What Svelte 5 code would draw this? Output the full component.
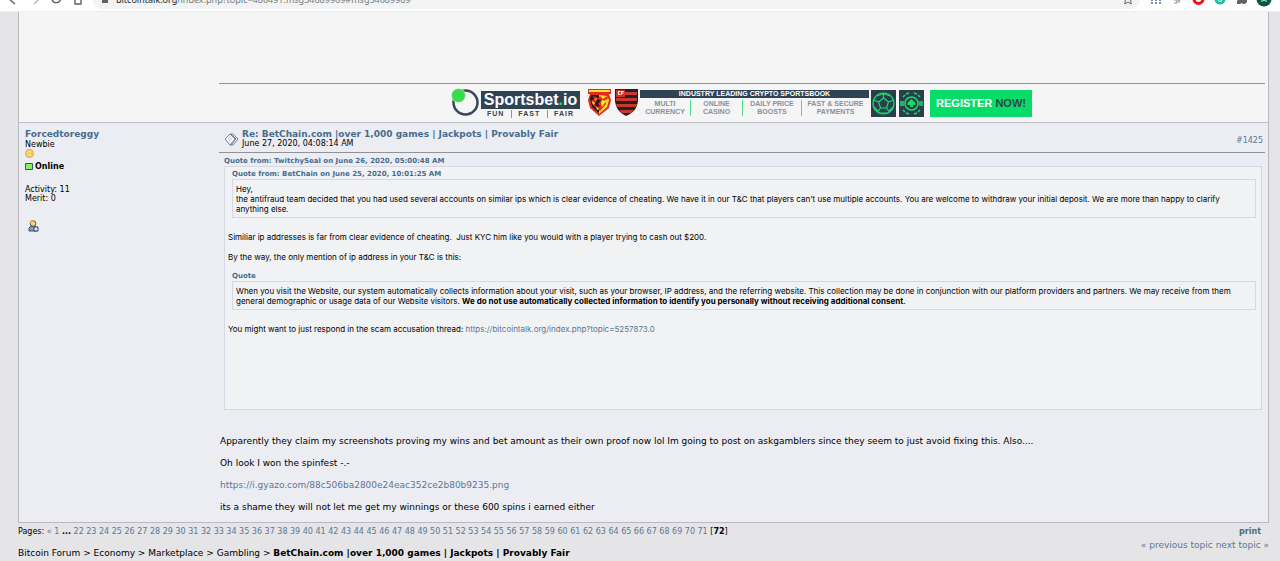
<script>
    const pages = Array.from({ length: 50 }, (_, i) => i + 22);
    const crumbs = ["Bitcoin Forum", "Economy", "Marketplace", "Gambling"];
    const topic = "BetChain.com |over 1,000 games | Jackpots | Provably Fair";
    const features = [
        ["MULTI", "CURRENCY"],
        ["ONLINE", "CASINO"],
        ["DAILY PRICE", "BOOSTS"],
        ["FAST & SECURE", "PAYMENTS"]
    ];
</script>

<header class="browser">
    <div class="nav">
        <svg width="93" height="12" viewBox="0 0 93 12" fill="none" stroke="#5f6368" stroke-width="1.4">
            <path d="M15 4 L9 -1" />
            <path d="M34 4 L39 -1" stroke="#b8babd" />
            <path d="M52 -1 A4.3 4.3 0 0 0 60.5 -1" />
            <path d="M75 -1 V4 H81 V-1" />
        </svg>
    </div>
    <div class="address">
        <svg width="6" height="12" viewBox="0 0 6 12"><path d="M0 0 H6 V3 H0Z" fill="#5f6368" /></svg>
        <span class="url"><b>bitcointalk.org</b>/index.php?topic=486491.msg54689969#msg54689969</span>
        <svg width="10" height="12" viewBox="0 0 10 12" fill="none" stroke="#5f6368"><path d="M2.5 -1 L1.8 4 L5 2 L8.2 4 L7.5 -1" /></svg>
    </div>
    <svg class="extensions" width="130" height="12" viewBox="0 0 130 12">
        <path d="M1 0h2v1h-2zm4 0h2v1h-2zm4 0h2v1h-2zM1 2h2v2h-2zm4 0h2v2h-2zm4 0h2v2h-2z" fill="#7b8aa5" />
        <path d="M24 0h3v3h-3M29 0v3M28 0h2" fill="none" stroke="#85888b" />
        <path d="M44 -1a4.500 4.500 0 0 0 9 0" fill="none" stroke="#ee1218" stroke-width="3" />
        <circle cx="70" cy="-1" r="5.5" fill="#15c39a" />
        <path d="M68 -1a2 2 0 0 0 4 1h-2" fill="none" stroke="#fff" />
        <path d="M87 4v-3l2-2h8v3l-2 2h-2l-1-1-2 1z" fill="#5f6368" />
        <circle cx="114" cy="-1" r="7.5" fill="#075846" />
        <path d="M112 2v-4l2 3 2-3v4" fill="none" stroke="#d9e9e5" />
    </svg>
</header>

<main>
    <section class="posts">
        <div class="previous">
            <hr>
            <div class="banner">
                <svg width="30" height="29" viewBox="0 0 30 29">
                    <circle cx="14.5" cy="14.5" r="12" fill="none" stroke="#3b4658" stroke-width="2.5" />
                    <circle cx="7.5" cy="7.5" r="7" fill="#35dc4a" stroke="#f5f5f5" stroke-width="0.6" />
                </svg>
                <div class="brand">
                    <div class="name">Sportsbet<i>.</i>io</div>
                    <div class="slogan"><span>FUN</span><i></i><span>FAST</span><i></i><span>FAIR</span></div>
                </div>
                <svg class="crest" width="25" height="29" viewBox="0 0 25 29">
                    <path d="M1 1h23v5h-2l2 6-2 8-10 8-9-8-2-8 2-6H1z" fill="#e32b20" />
                    <path d="M2 2h21v2H2z" fill="#ffdf31" />
                    <path d="M4 7h8v18l-7-6-2-8z" fill="#231d1a" />
                    <path d="M12 7l8 1 2 4-2 7-8 7z" fill="#f8dc2e" />
                    <path d="M6 8l5 2 2-2 3 3 4-3 1 3-3 1 1 4-6 7-6-5-3-5 3-2z" fill="#e32b20" />
                    <path d="M5 13l3 2-2 2zM15 12l4 1-4 6-1-4zM9 10l2 3-3-1zM9 18l3 3-2 1z" fill="#ffe22e" />
                    <path d="M10 11l4 1-3 4 2 2-3 1-2-3z" fill="#2a1714" />
                </svg>
                <svg class="crest" width="23" height="29" viewBox="0 0 23 29">
                    <path d="M0 1h23v12c-1 8-5 12-12 15C5 25 1 21 0 13z" fill="#241f22" />
                    <path d="M10 4h12v3H10zM1 10h21v3H1zM1 16h21l-1 3H2zM4 22h15l-3 3H7z" fill="#c9382c" />
                    <path d="M1 2h9v7H1z" fill="#d23328" />
                    <path d="M5.5 3.5h-2v3h2M8.5 3.5h-2v3M6.5 5h2" stroke="#fff" fill="none" />
                </svg>
                <div class="industry">
                    <strong>INDUSTRY LEADING CRYPTO SPORTSBOOK</strong>
                    <div class="features">
                        {#each features as feature}
                            <span>{feature[0]}<br>{feature[1]}</span>
                        {/each}
                    </div>
                </div>
                <svg class="tile" width="25" height="27" viewBox="0 0 25 27" fill="none" stroke="#1edb68" stroke-width="1.2">
                    <path d="M0 0h25v27H0z" fill="#293f4d" stroke="none" />
                    <circle cx="12.5" cy="13.5" r="10.5" />
                    <path d="M12.5 8l5 4-2 6h-6l-2-6zM12.5 8V3M17.5 12l5-2M15.5 18l3 4M9.5 18l-3 4M7.5 12l-5-2M5 6l7.5-2 7.5 2M3 17l4 4M22 17l-4 4M8 23h9" />
                </svg>
                <svg class="tile" width="25" height="27" viewBox="0 0 25 27" fill="none" stroke="#1edb68" stroke-width="1.5">
                    <path d="M0 0h25v27H0z" fill="#293f4d" stroke="none" />
                    <circle cx="12.5" cy="13.5" r="6.5" />
                    <path d="M12.5 9l4 4v2h-3l1 2h-4l1-2h-3v-2z" fill="#1edb68" stroke="none" />
                    <path d="M2 11v5M4 11v5M21 11v5M23 11v5M7 4l3-1M15 3l3 1M7 23l3 1M15 24l3-1M4 7l2-2M19 5l2 2M4 20l2 2M21 20l-2 2" />
                </svg>
                <a class="register" href="#register">REGISTER <b>NOW!</b></a>
            </div>
        </div>

        <article class="post">
            <aside>
                <a class="user" href="#user">Forcedtoreggy</a>
                <div>Newbie</div>
                <svg width="9" height="9" viewBox="0 0 9 9">
                    <circle cx="4.5" cy="4.5" r="4" fill="#f5cc68" stroke="#dda94a" />
                    <path d="M2 4q2-3 4-1M3 6h3" stroke="#ffe9ae" fill="none" />
                </svg>
                <div class="online">
                    <svg width="8" height="8" viewBox="0 0 8 8"><path d="M.5 .5h7v6h-7z" fill="#87ee66" stroke="#36576d" /></svg>
                    <b>Online</b>
                </div>
                <div class="stats">Activity: 11<br>Merit: 0</div>
                <a class="profile" href="#profile" aria-label="View Profile">
                    <svg width="11" height="12" viewBox="0 0 11 12">
                        <path d="M1 11v-3l2-2h4l2 2v3z" fill="#73a2d0" stroke="#47515e" />
                        <circle cx="5" cy="3.5" r="2.8" fill="#f6d28b" stroke="#59503e" />
                        <path d="M2 3q1-3 4-2" fill="none" stroke="#ffb400" />
                        <path d="M6 7h4v4H6z" fill="#e9edf0" stroke="#333c46" />
                    </svg>
                </a>
            </aside>
            <div class="message">
                <div class="heading">
                    <svg width="15" height="15" viewBox="0 0 15 15" fill="#f4f6fb" stroke="#75839a">
                        <path d="M7 1h2l5 5-5 6H7" />
                        <path d="M6 1h1l5 5-5 6H6" />
                        <path d="M6 1l5 5-5 6-5-6z" />
                        <path d="M4 6l3-3M5 8l3-3" stroke="#b6c2d1" />
                    </svg>
                    <div class="title">
                        <a href="#topic">Re: {topic}</a>
                        <div>June 27, 2020, 04:08:14 AM</div>
                    </div>
                    <a class="number" href="#msg">#1425</a>
                </div>
                <hr>
                <a class="quoteheader" href="#quote">Quote from: TwitchySeal on June 26, 2020, 05:00:48 AM</a>
                <blockquote class="outer">
                    <a class="quoteheader" href="#quote">Quote from: BetChain on June 25, 2020, 10:01:25 AM</a>
                    <blockquote>
                        Hey,<br>
                        the antifraud team decided that you had used several accounts on similar ips which is clear evidence of cheating. We have it in our T&C that players can't use multiple accounts. You are welcome to withdraw your initial deposit. We are more than happy to clarify<br>
                        anything else.
                    </blockquote>
                    <p>Similiar ip addresses is far from clear evidence of cheating.&nbsp; Just KYC him like you would with a player trying to cash out $200.</p>
                    <p>By the way, the only mention of ip address in your T&C is this:</p>
                    <div class="quoteheader">Quote</div>
                    <blockquote>
                        When you visit the Website, our system automatically collects information about your visit, such as your browser, IP address, and the referring website. This collection may be done in conjunction with our platform providers and partners. We may receive from them<br>
                        general demographic or usage data of our Website visitors. <b>We do not use automatically collected information to identify you personally without receiving additional consent.</b>
                    </blockquote>
                    <p>You might want to just respond in the scam accusation thread: <a href="#thread">https://bitcointalk.org/index.php?topic=5257873.0</a></p>
                </blockquote>
                <div class="body">
                    <p>Apparently they claim my screenshots proving my wins and bet amount as their own proof now lol Im going to post on askgamblers since they seem to just avoid fixing this. Also....</p>
                    <p>Oh look I won the spinfest -.-</p>
                    <p><a href="#image">https://i.gyazo.com/88c506ba2800e24eac352ce2b80b9235.png</a></p>
                    <p>its a shame they will not let me get my winnings or these 600 spins i earned either</p>
                </div>
            </div>
        </article>
    </section>

    <footer>
        <div>
            <div class="pages">
                Pages: <a href="#prev">«</a> <a href="#1">1</a> <b>...</b>
                {#each pages as page}<a href="#{page}">{page}</a>{" "}{/each}[<b>72</b>]
            </div>
            <div class="crumbs">
                {#each crumbs as crumb}<a href="#{crumb}">{crumb}</a>{" > "}{/each}<b>{topic}</b>
            </div>
        </div>
        <div class="links">
            <a class="print" href="#print">print</a>
            <div><a href="#previous">« previous topic</a> <a href="#next">next topic »</a></div>
        </div>
    </footer>
</main>

<style>
    :global(body) {
        margin: 0;
        background-color: #e5e5e7;
        overflow: hidden;
    }
    a {
        color: #5a7797;
        text-decoration: none;
    }
    p, blockquote {
        margin: 0;
    }
    svg {
        display: block;
        flex: none;
    }
    hr {
        height: 1px;
        margin: 0;
        border: 0;
        background-color: #919197;
    }
    .browser {
        display: flex;
        height: 11px;
        overflow: hidden;
        background-color: #fff;
        border-bottom: 1px solid #ececec;
    }
    .nav {
        display: flex;
        width: 93px;
    }
    .address {
        display: flex;
        flex: 1;
        height: 9px;
        gap: 8px;
        padding: 0 7px 0 9px;
        background-color: #f1f3f4;
        border-radius: 0 0 10px 10px;
    }
    .url {
        flex: 1;
        margin-top: -6px;
        font: 9px/12px "Noto Sans", sans-serif;
        color: #777b80;
    }
    .url b {
        font-weight: 400;
        color: #24272b;
    }
    .extensions {
        margin-left: 10px;
    }
    main {
        font-family: Verdana, "DejaVu Sans", sans-serif;
        font-size: 9px;
        line-height: 11px;
        color: #000;
        padding: 0 11px 0 18px;
    }
    .posts {
        border: 1px solid #b9bac0;
        border-top: 0;
        background-color: #ecedf3;
    }
    .previous {
        height: 111px;
        box-sizing: border-box;
        padding: 71px 3px 0 200px;
        background-color: #f5f5f5;
        border-bottom: 1px solid #bfc0ca;
    }
    .banner {
        display: flex;
        justify-content: center;
        margin-top: 4px;
        margin-right: 1px;
        font-family: "Liberation Sans", Arial, sans-serif;
        font-weight: 700;
    }
    .brand {
        width: 99px;
    }
    .name {
        margin-top: 3px;
        background-color: #304354;
        color: #fff;
        font-size: 16px;
        line-height: 18px;
        text-align: center;
    }
    .name i {
        font-style: normal;
        color: #1edb68;
    }
    .slogan {
        display: flex;
        justify-content: space-between;
        padding: 1px 6px;
        font-size: 7px;
        line-height: 8px;
        letter-spacing: 1px;
        color: #344253;
    }
    .slogan i {
        width: 1px;
        background-color: #1edb68;
    }
    .crest {
        margin-left: 7px;
    }
    .crest + .crest {
        margin-left: 3px;
    }
    .industry {
        width: 229px;
        margin: 2px 2px 0 2px;
        text-align: center;
    }
    .industry strong {
        display: block;
        background-color: #304354;
        color: #fff;
        font-size: 7px;
        line-height: 8px;
        font-weight: 900;
    }
    .features {
        display: grid;
        grid-template-columns: 50fr 52fr 59fr 68fr;
        margin-top: 2px;
        color: #84929f;
        font-size: 7px;
        line-height: 8px;
    }
    .features span {
        white-space: nowrap;
    }
    .features span + span {
        border-left: 1px solid #4bde84;
    }
    .tile {
        margin-top: 2px;
    }
    .tile + .tile {
        margin-left: 3px;
    }
    .register {
        width: 102px;
        height: 27px;
        margin: 2px 0 0 6px;
        background-color: #08dc68;
        color: #fff;
        font-size: 11px;
        line-height: 27px;
        text-align: center;
    }
    .register b {
        color: #294a48;
    }
    .post {
        display: flex;
        min-height: 399px;
    }
    aside {
        width: 194px;
        flex: none;
        padding: 6px 0 0 6px;
        font-size: 8px;
        line-height: 9px;
    }
    .user, .title a {
        display: block;
        font-size: 9px;
        line-height: 10px;
        font-weight: 700;
        color: #476c8e;
    }
    .user {
        margin-bottom: 1px;
    }
    .online {
        display: flex;
        align-items: center;
        gap: 2px;
        margin-top: 4px;
    }
    .stats {
        margin-top: 14px;
    }
    .profile {
        display: block;
        margin: 17px 0 0 3px;
    }
    .message {
        flex: 1;
        min-width: 0;
        padding: 6px 3px 0 0;
    }
    .heading {
        display: flex;
        align-items: center;
        height: 23px;
        padding: 0 2px 0 5px;
        gap: 3px;
        font-size: 8px;
        line-height: 10px;
    }
    .title {
        flex: 1;
        align-self: flex-start;
    }
    .quoteheader {
        display: block;
        font-family: Verdana, "DejaVu Sans", sans-serif;
        font-size: 7px;
        line-height: 9px;
        font-weight: 700;
        color: #476c8e;
    }
    .message > .quoteheader {
        margin: 4px 0 0 5px;
    }
    blockquote {
        padding: 4px 3px 3px;
        border: 1px solid #d6d8e6;
        background-color: #f1f2f4;
        font-family: Inter, Verdana, sans-serif;
        font-size: 8px;
        line-height: 10px;
    }
    .outer {
        min-height: 236px;
        padding-top: 3px;
        margin: 0 3px 0 5px;
    }
    .outer > .quoteheader, .outer > blockquote {
        margin-left: 4px;
        margin-right: 2px;
    }
    .outer > p {
        margin: 10px 0;
    }
    .outer > blockquote + p {
        margin-top: 14px;
    }
    .body {
        padding: 26px 0 7px 1px;
    }
    .body p + p {
        margin-top: 11px;
    }
    footer {
        display: flex;
        justify-content: space-between;
        padding-top: 3px;
    }
    .pages {
        font-size: 8px;
    }
    .crumbs {
        margin-top: 11px;
    }
    .crumbs a {
        color: #000;
    }
    .links {
        text-align: right;
    }
    .print {
        display: block;
        margin-right: 8px;
        margin-bottom: 3px;
        font-size: 8px;
        font-weight: 700;
        color: #476c8e;
    }
</style>
